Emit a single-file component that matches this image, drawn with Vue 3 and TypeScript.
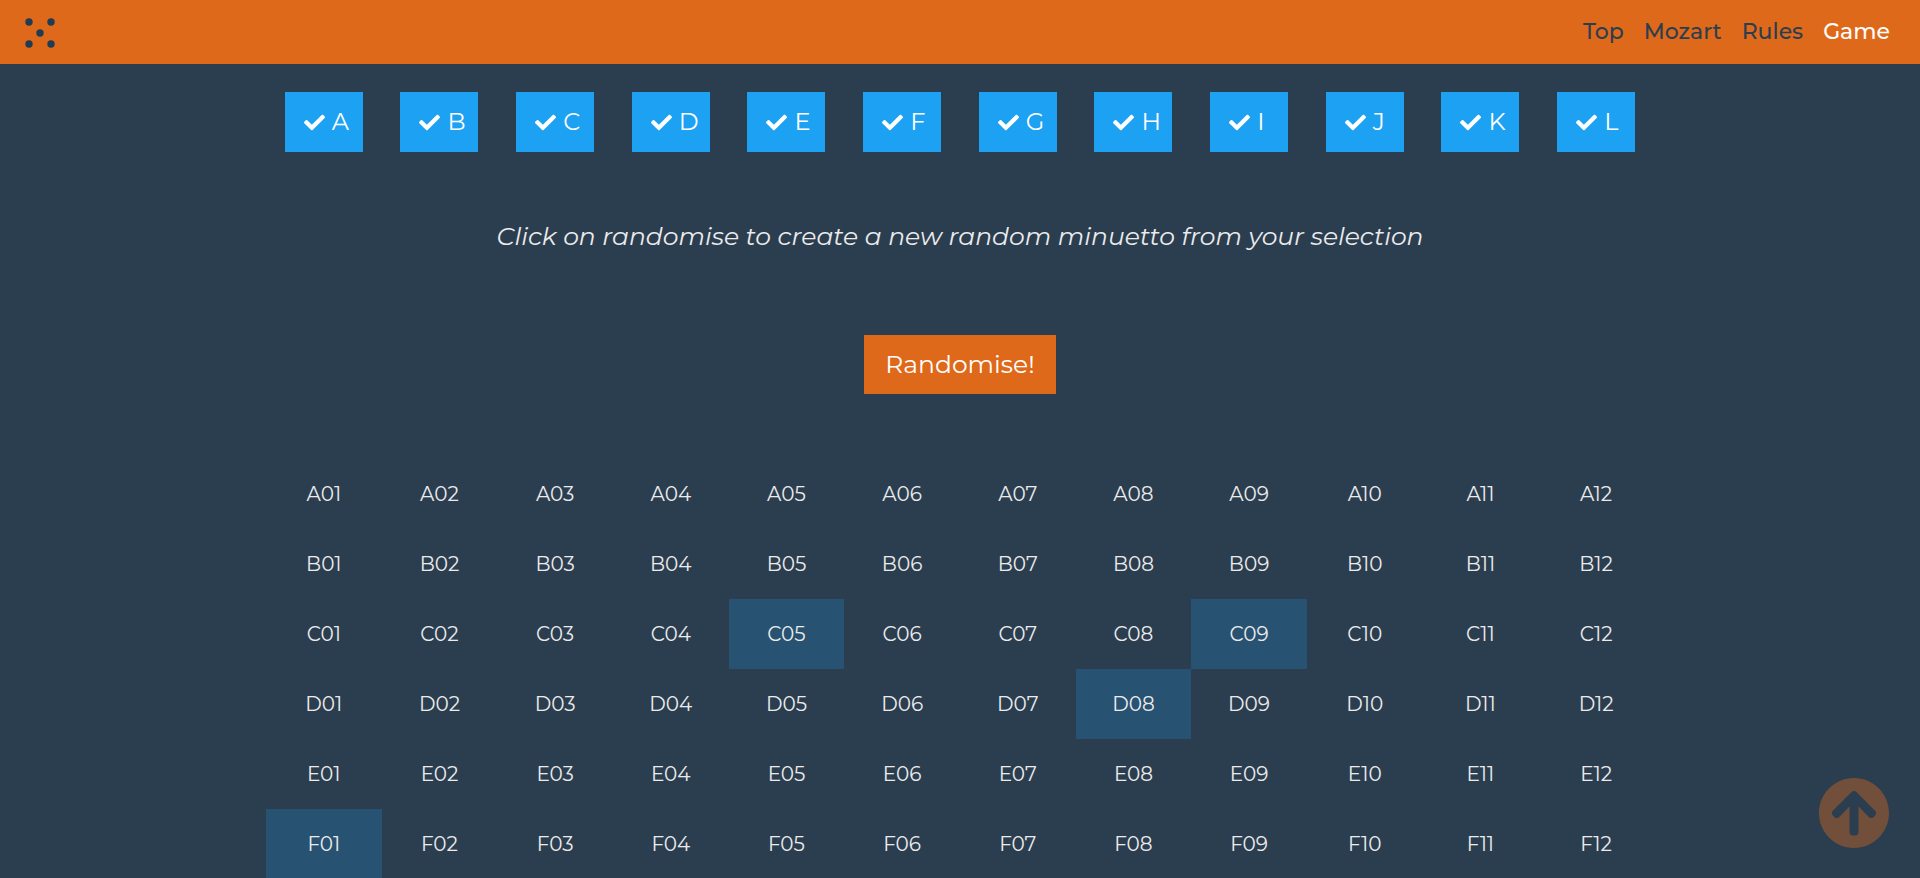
<script setup lang="ts">
import { ref } from 'vue'

interface NavLink {
  label: string
  target: string
  active?: boolean
}

const links: NavLink[] = [
  { label: 'Top', target: '#top' },
  { label: 'Mozart', target: '#mozart' },
  { label: 'Rules', target: '#rules' },
  { label: 'Game', target: '#game', active: true },
]

const columns: string[] = [...'ABCDEFGHIJKL']
const rows: string[] = [...'ABCDEF']
const enabled = ref<string[]>([...columns])
const picked = ref<string[]>(['F01', 'C05', 'D08', 'C09'])

const code = (row: string, index: number): string => row + String(index).padStart(2, '0')

function randomise(): void {
  const pool = rows.filter((row) => enabled.value.includes(row))
  if (!pool.length) return
  picked.value = columns.map((_, i) => code(pool[Math.floor(Math.random() * pool.length)], i + 1))
}
</script>

<template>
  <div id="top" class="page">
    <header class="bar">
      <a href="#top" class="logo" aria-label="Home">
        <svg viewBox="0 0 40 40" aria-hidden="true">
          <circle cx="9" cy="9" r="3.7" />
          <circle cx="31" cy="9" r="3.7" />
          <circle cx="20" cy="20" r="3.7" />
          <circle cx="9" cy="31" r="3.7" />
          <circle cx="31" cy="31" r="3.7" />
        </svg>
      </a>
      <nav class="nav">
        <a
          v-for="link in links"
          :key="link.label"
          :href="link.target"
          :class="{ active: link.active }"
        >{{ link.label }}</a>
      </nav>
    </header>

    <main id="game" class="game">
      <div class="toggles">
        <label v-for="column in columns" :key="column" class="toggle">
          <input v-model="enabled" type="checkbox" :value="column" />
          <svg class="tick" viewBox="0 0 512 512" aria-hidden="true">
            <path d="M173.898 439.404l-166.4-166.4c-9.997-9.997-9.997-26.206 0-36.204l36.203-36.204c9.997-9.998 26.207-9.998 36.204 0L192 312.69 432.095 72.596c9.997-9.997 26.207-9.997 36.204 0l36.203 36.204c9.997 9.997 9.997 26.206 0 36.204l-294.4 294.401c-9.998 9.997-26.207 9.997-36.204-.001z" />
          </svg>
          <span>{{ column }}</span>
        </label>
      </div>

      <p class="hint">Click on randomise to create a new random minuetto from your selection</p>

      <button type="button" class="randomise" @click="randomise">Randomise!</button>

      <table class="grid">
        <tbody>
          <tr v-for="row in rows" :key="row">
            <td
              v-for="(_, i) in columns"
              :key="i"
              :class="{ picked: picked.includes(code(row, i + 1)) }"
            >{{ code(row, i + 1) }}</td>
          </tr>
        </tbody>
      </table>
    </main>

    <a href="#top" class="to-top" aria-label="Back to top">
      <svg viewBox="8 8 496 496" aria-hidden="true">
        <path d="M8 256C8 119 119 8 256 8s248 111 248 248-111 248-248 248S8 393 8 256zm143.6 28.9l72.4-75.5V392c0 13.3 10.7 24 24 24h16c13.3 0 24-10.7 24-24V209.4l72.4 75.5c9.3 9.7 24.8 9.9 34.3.4l10.9-11c9.4-9.4 9.4-24.6 0-33.9L273 107.7c-9.4-9.4-24.6-9.4-33.9 0L106.3 240.4c-9.4 9.4-9.4 24.6 0 33.9l10.9 11c9.6 9.5 25.1 9.3 34.4-.4z" />
      </svg>
    </a>
  </div>
</template>

<style>
body {
  margin: 0;
  background: #2b3e50;
}
</style>

<style scoped>
.page {
  height: 100vh;
  overflow: hidden;
  box-sizing: border-box;
  background: #2b3e50;
  color: #ebebeb;
  font-family: Montserrat, Inter, "Liberation Sans", sans-serif;
}

.bar {
  display: flex;
  align-items: center;
  justify-content: space-between;
  height: 64px;
  padding: 0 30px 0 20px;
  background: #df691a;
}

.logo,
.logo svg {
  display: block;
  width: 40px;
  height: 40px;
}

.logo {
  padding-top: 2px;
}

.logo svg {
  fill: #1f3c50;
}

.nav {
  display: flex;
  gap: 20px;
  font-size: 22px;
  font-weight: 500;
  line-height: 28px;
}

.nav a {
  color: #2b3e50;
  text-decoration: none;
}

.nav a.active {
  color: #fff;
}

.game {
  display: flex;
  flex-direction: column;
  align-items: center;
  max-width: 1388px;
  margin: 0 auto;
  padding-top: 28px;
}

.toggles {
  display: grid;
  grid-template-columns: repeat(12, 1fr);
  justify-items: center;
  width: 100%;
}

.toggle {
  position: relative;
  display: flex;
  align-items: center;
  gap: 7px;
  box-sizing: border-box;
  width: 78px;
  height: 60px;
  padding-left: 19px;
  background: #1da1f2;
  color: #fff;
  font-size: 24px;
  line-height: 32px;
  cursor: pointer;
}

.toggle input {
  position: absolute;
  inset: 0;
  width: 100%;
  height: 100%;
  margin: 0;
  opacity: 0;
  cursor: pointer;
}

.tick {
  width: 21px;
  height: 21px;
  fill: currentColor;
}

.toggle input:not(:checked) + .tick {
  visibility: hidden;
}

.hint {
  margin: 68px 0 0;
  font-size: 25px;
  font-style: italic;
  line-height: 32px;
}

.randomise {
  margin: 83px 0 65px;
  padding: 0 0 2px;
  width: 192px;
  height: 59px;
  border: 0;
  background: #df691a;
  color: #fff;
  font-family: inherit;
  font-size: 25px;
  line-height: 32px;
  cursor: pointer;
}

.grid {
  width: 100%;
  table-layout: fixed;
  border-collapse: collapse;
}

.grid td {
  height: 70px;
  padding: 0;
  font-size: 20px;
  line-height: 28px;
  text-align: center;
}

.grid td.picked {
  background: #285272;
}

.to-top {
  position: fixed;
  right: 31px;
  bottom: 30px;
  width: 70px;
  height: 70px;
  opacity: 0.4;
}

.to-top svg {
  display: block;
  fill: #df691a;
}
</style>
